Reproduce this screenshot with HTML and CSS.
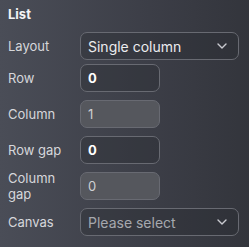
FILE: index.html
```html
<!DOCTYPE html>
<html lang="en">
<head>
    <meta charset="UTF-8">
    <meta name="viewport" content="width=device-width, initial-scale=1.0">
    <title>List</title>
    <link rel="stylesheet" href="styles.css">
</head>
<body>
    <div class="panel">
        <h2 class="title">List</h2>

        <div class="fields fields-head">
            <label class="field-label">Layout</label>
            <div class="select">
                <span class="select-value">Single column</span>
                <svg class="chevron" width="10" height="6" viewBox="0 0 10 6"><path d="M1 1l4 4 4-4" fill="none" stroke="#c9cad0" stroke-width="1.4" stroke-linecap="round" stroke-linejoin="round"/></svg>
            </div>
        </div>

        <div class="fields">
            <label class="field-label">Row</label>
            <input class="num" type="text" value="0">

            <label class="field-label">Column</label>
            <input class="num" type="text" value="1" disabled>

            <label class="field-label">Row gap</label>
            <input class="num" type="text" value="0">

            <label class="field-label">Column gap</label>
            <input class="num" type="text" value="0" disabled>

            <label class="field-label">Canvas</label>
            <div class="select">
                <span class="select-value placeholder">Please select</span>
                <svg class="chevron" width="10" height="6" viewBox="0 0 10 6"><path d="M1 1l4 4 4-4" fill="none" stroke="#c9cad0" stroke-width="1.4" stroke-linecap="round" stroke-linejoin="round"/></svg>
            </div>
        </div>
    </div>
</body>
</html>
```

FILE: styles.css
```css
* {
    margin: 0;
    padding: 0;
    box-sizing: border-box;
    font-family: Inter, 'Noto Sans', sans-serif;
}

body {
    background: linear-gradient(90deg, #4a4d57 0%, #3c3e47 60%, #33353c 100%);
    min-height: 100vh;
}

.panel {
    padding: 6px 10px 10px 8px;
}

.title {
    color: #f2f2f4;
    font-size: 13px;
    font-weight: 700;
    line-height: 16px;
    margin-bottom: 10px;
}

.fields {
    display: grid;
    grid-template-columns: 60px 1fr;
    grid-auto-rows: 28px;
    column-gap: 12px;
    row-gap: 8px;
    align-items: center;
}

.fields-head {
    margin-bottom: 4px;
}

.field-label {
    color: #d6d7db;
    font-size: 13px;
    line-height: 16px;
}

.select {
    height: 28px;
    border: 1px solid #686a72;
    border-radius: 7px;
    background: rgba(40, 42, 48, 0.35);
    display: flex;
    align-items: center;
    justify-content: space-between;
    padding: 0 11px 0 7px;
}

.select-value {
    color: #ececee;
    font-size: 14px;
}

.placeholder {
    color: #a6a8ae;
}

.num {
    width: 80px;
    height: 28px;
    border: 1px solid #686a72;
    border-radius: 7px;
    background: rgba(40, 42, 48, 0.35);
    color: #ffffff;
    font-size: 13px;
    font-weight: 700;
    padding: 0 7px;
    outline: none;
}

.num:disabled {
    background: #55575d;
    color: #cfd0d3;
    font-weight: 400;
}
```
